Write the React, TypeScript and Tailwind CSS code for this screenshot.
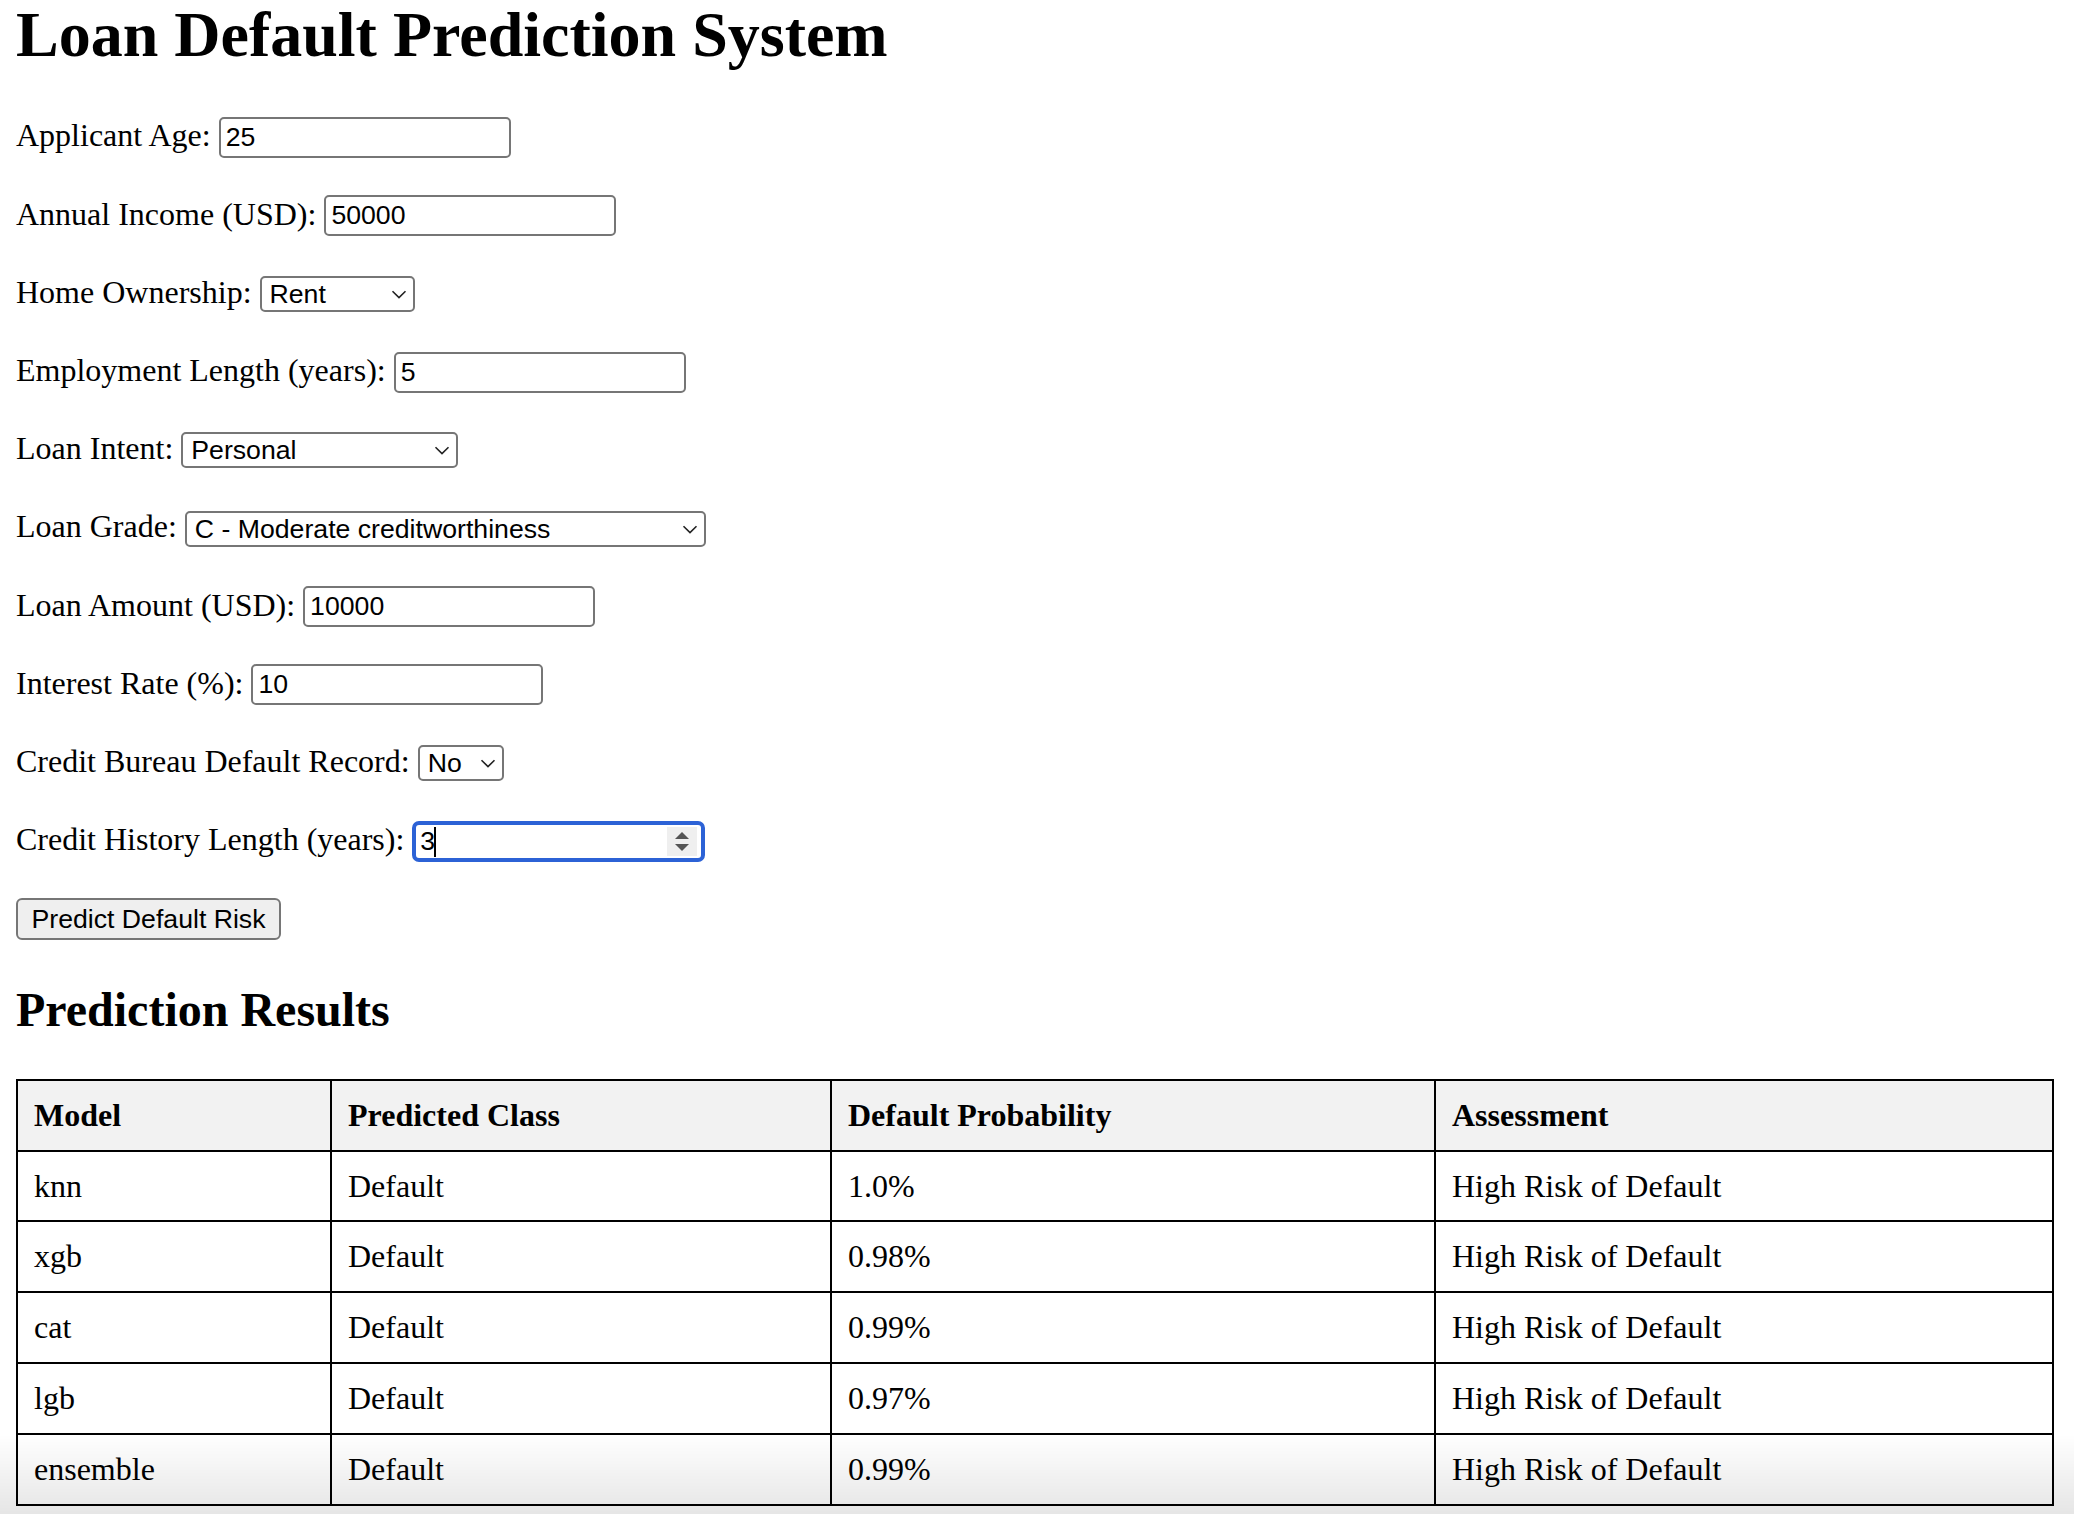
import React from 'react'

type Field = {
  label: string
  kind: 'input' | 'select' | 'focus'
  value: string
  width?: string
  options?: string[]
}

const fields: Field[] = [
  { label: 'Applicant Age:', kind: 'input', value: '25' },
  { label: 'Annual Income (USD):', kind: 'input', value: '50000' },
  { label: 'Home Ownership:', kind: 'select', value: 'Rent', width: 'w-[155px]', options: ['Rent', 'Own', 'Mortgage', 'Other'] },
  { label: 'Employment Length (years):', kind: 'input', value: '5' },
  { label: 'Loan Intent:', kind: 'select', value: 'Personal', width: 'w-[277px]', options: ['Personal', 'Education', 'Medical', 'Venture', 'Home Improvement', 'Debt Consolidation'] },
  {
    label: 'Loan Grade:',
    kind: 'select',
    value: 'C - Moderate creditworthiness',
    width: 'w-[521px]',
    options: ['A - Highest creditworthiness', 'B - High creditworthiness', 'C - Moderate creditworthiness', 'D - Low creditworthiness'],
  },
  { label: 'Loan Amount (USD):', kind: 'input', value: '10000' },
  { label: 'Interest Rate (%):', kind: 'input', value: '10' },
  { label: 'Credit Bureau Default Record:', kind: 'select', value: 'No', width: 'w-[86px]', options: ['No', 'Yes'] },
  { label: 'Credit History Length (years):', kind: 'focus', value: '3' },
]

const results = [
  { model: 'knn', cls: 'Default', prob: '1.0%', note: 'High Risk of Default' },
  { model: 'xgb', cls: 'Default', prob: '0.98%', note: 'High Risk of Default' },
  { model: 'cat', cls: 'Default', prob: '0.99%', note: 'High Risk of Default' },
  { model: 'lgb', cls: 'Default', prob: '0.97%', note: 'High Risk of Default' },
  { model: 'ensemble', cls: 'Default', prob: '0.99%', note: 'High Risk of Default' },
]

const sans = "font-['Liberation_Sans',Arial,sans-serif] text-[26.67px] text-black"

function Control({ f }: { f: Field }) {
  if (f.kind === 'select') {
    return (
      <div className={`relative ${f.width}`}>
        <select
          defaultValue={f.value}
          className={`${sans} appearance-none w-full h-[36px] border-2 border-[#767676] rounded-[5px] bg-white pl-[8px] pr-[30px] leading-[30px]`}
        >
          {f.options!.map((o) => (
            <option key={o}>{o}</option>
          ))}
        </select>
        <svg className="absolute right-[8px] top-[14px] pointer-events-none" width="16" height="9" viewBox="0 0 16 9">
          <path d="M1.5 1.2 L8 7.6 L14.5 1.2" fill="none" stroke="#222" strokeWidth="1.6" />
        </svg>
      </div>
    )
  }
  if (f.kind === 'focus') {
    return (
      <div className="relative w-[293px]">
        <input
          type="text"
          defaultValue={f.value}
          className={`${sans} w-full h-[41px] border-[4px] border-[#2c62d6] rounded-[7px] pl-[4px] outline-none`}
        />
        <div className="absolute left-[22px] top-[6px] h-[30px] w-[2px] bg-black" />
        <div className="absolute right-[8px] top-[6px] w-[30px] h-[29px] bg-[#efefef] flex flex-col items-center justify-center gap-[5px]">
          <svg width="14" height="7" viewBox="0 0 14 7">
            <path d="M0 7 L7 0 L14 7 Z" fill="#555" />
          </svg>
          <svg width="14" height="7" viewBox="0 0 14 7">
            <path d="M0 0 L14 0 L7 7 Z" fill="#555" />
          </svg>
        </div>
      </div>
    )
  }
  return (
    <input
      type="text"
      defaultValue={f.value}
      className={`${sans} w-[292px] h-[41px] border-2 border-[#767676] rounded-[5px] pl-[5px] bg-white`}
    />
  )
}

export default function App() {
  return (
    <div className="min-h-screen bg-white px-[16px] text-black font-['Liberation_Serif','Times_New_Roman',serif]">
      <h1 className="text-[64px] font-bold leading-[70px] h-[70px]">Loan Default Prediction System</h1>

      <form className="mt-[28.5px]" onSubmit={(e) => e.preventDefault()}>
        {fields.map((f) => (
          <div key={f.label} className="h-[78.2px] flex items-center gap-[8px]">
            <label className="text-[32px] leading-[37px] pb-[3.4px]">{f.label}</label>
            <Control f={f} />
          </div>
        ))}
        <div className="h-[78.2px] flex items-center">
          <button
            type="submit"
            className={`${sans} h-[42px] w-[265px] border-2 border-[#767676] rounded-[6px] bg-[#efefef] leading-[36px]`}
          >
            Predict Default Risk
          </button>
        </div>
      </form>

      <h2 className="mt-[23.5px] text-[48px] font-bold leading-[55px]">Prediction Results</h2>

      <table className="mt-[41.7px] w-[2036px] table-fixed border-collapse text-[32px] leading-[36.8px]">
        <colgroup>
          <col className="w-[314px]" />
          <col className="w-[500px]" />
          <col className="w-[604px]" />
          <col className="w-[618px]" />
        </colgroup>
        <thead>
          <tr className="bg-[#f2f2f2]">
            {['Model', 'Predicted Class', 'Default Probability', 'Assessment'].map((h) => (
              <th key={h} className="border-2 border-black px-[16px] py-[16px] text-left font-bold">
                {h}
              </th>
            ))}
          </tr>
        </thead>
        <tbody>
          {results.map((r) => (
            <tr key={r.model}>
              <td className="border-2 border-black px-[16px] py-[16px]">{r.model}</td>
              <td className="border-2 border-black px-[16px] py-[16px]">{r.cls}</td>
              <td className="border-2 border-black px-[16px] py-[16px]">{r.prob}</td>
              <td className="border-2 border-black px-[16px] py-[16px]">{r.note}</td>
            </tr>
          ))}
        </tbody>
      </table>

      <div className="pointer-events-none fixed inset-x-0 bottom-0 h-[80px] bg-linear-to-b from-transparent to-black/10" />
    </div>
  )
}
